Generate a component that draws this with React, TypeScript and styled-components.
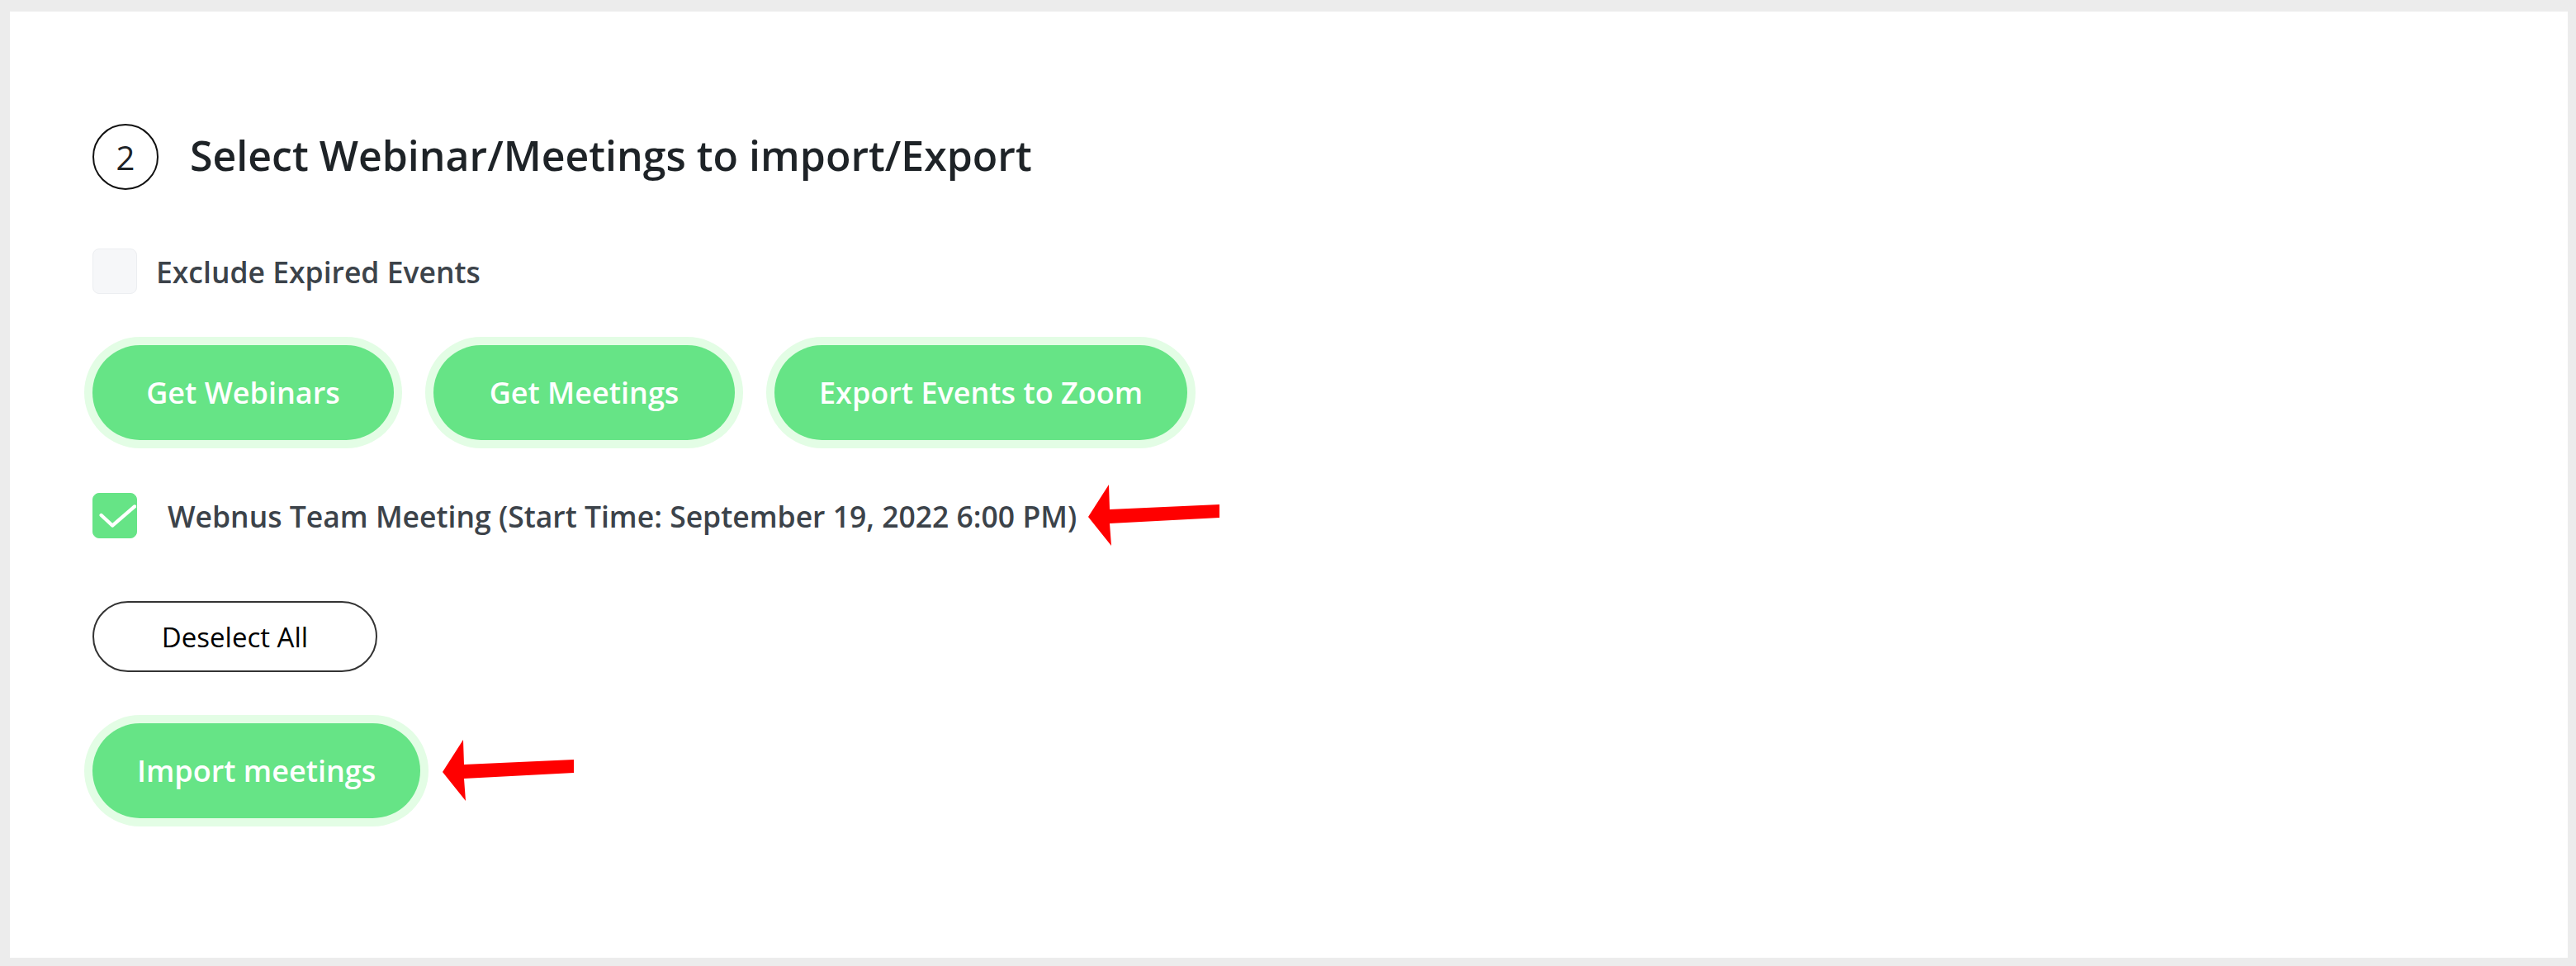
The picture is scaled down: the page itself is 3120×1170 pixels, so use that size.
import React from 'react';
import styled, { createGlobalStyle } from 'styled-components';

// STYLES
const GlobalStyle = createGlobalStyle`
  html, body {
    margin: 0;
    padding: 0;
    background: #ececec;
  }
  body {
    font-family: 'Open Sans', 'Noto Sans', sans-serif;
  }
`;

const Page = styled.div`
  box-sizing: border-box;
  width: 3120px;
  height: 1170px;
  padding: 14px 10px 10px 12px;
  background: #ececec;
`;

const Panel = styled.section`
  box-sizing: border-box;
  height: 100%;
  background: #ffffff;
  padding: 136px 0 0 100px;
  display: flex;
  flex-direction: column;
  align-items: flex-start;
`;

const StepHeader = styled.div`
  display: flex;
  align-items: center;
  height: 80px;
`;

const StepNumber = styled.span`
  box-sizing: border-box;
  width: 80px;
  height: 80px;
  border: 2px solid #111;
  border-radius: 50%;
  display: flex;
  align-items: center;
  justify-content: center;
  font-size: 40px;
  color: #1e2327;
`;

const Title = styled.h2`
  margin: -4px 0 0 38px;
  font-size: 50px;
  font-weight: 600;
  color: #1e2327;
`;

const CheckRow = styled.label<{ $top: number; $gap: number }>`
  display: flex;
  align-items: center;
  height: 55px;
  margin-top: ${p => p.$top}px;
  gap: ${p => p.$gap}px;
`;

const Box = styled.span<{ $checked?: boolean }>`
  box-sizing: border-box;
  width: 54px;
  height: 55px;
  border-radius: 8px;
  display: flex;
  align-items: center;
  justify-content: center;
  background: ${p => (p.$checked ? '#66e486' : '#f6f7f9')};
  border: 1px solid ${p => (p.$checked ? '#66e486' : '#eceef1')};
  flex-shrink: 0;
`;

const LabelText = styled.span`
  font-size: 35.5px;
  font-weight: 600;
  color: #3c434a;
`;

const ButtonRow = styled.div`
  display: flex;
  gap: 48px;
  margin-top: 62px;
`;

const GreenButton = styled.button`
  box-sizing: border-box;
  height: 115px;
  min-width: 365px;
  padding: 0 54px;
  border: none;
  border-radius: 58px;
  background: #66e486;
  box-shadow: 0 0 0 10px #e3fde5;
  color: #ffffff;
  font-family: 'Open Sans', sans-serif;
  font-size: 36px;
  font-weight: 600;
  cursor: pointer;
`;

const OutlineButton = styled.button`
  box-sizing: border-box;
  width: 345px;
  height: 86px;
  margin-top: 76px;
  border: 2px solid #333;
  border-radius: 43px;
  background: #ffffff;
  color: #000;
  font-family: 'Open Sans', sans-serif;
  font-size: 33px;
  font-weight: 400;
  cursor: pointer;
`;

const ImportRow = styled.div`
  display: flex;
  align-items: center;
  margin-top: 62px;
`;

const ArrowMark = styled.svg<{ $left: number }>`
  width: 160px;
  height: 75px;
  margin: -10px 0 -10px ${p => p.$left}px;
  flex-shrink: 0;
`;

// COMPONENTS
const Arrow: React.FC<{ left: number }> = ({ left }) => (
  <ArrowMark $left={left} viewBox="0 0 160 75">
    <polygon
      points="0,39 25,0 26,30 159,24 159,40 26,47 28,74"
      fill="#ff0000"
    />
  </ArrowMark>
);

const Tick: React.FC = () => (
  <svg width="54" height="55" viewBox="0 0 54 55">
    <polyline
      points="10,27 24,40 52,16"
      fill="none"
      stroke="#ffffff"
      strokeWidth="4.5"
      strokeLinecap="round"
      strokeLinejoin="round"
    />
  </svg>
);

const App: React.FC = () => (
  <Page>
    <GlobalStyle />
    <Panel>
      <StepHeader>
        <StepNumber>2</StepNumber>
        <Title>Select Webinar/Meetings to import/Export</Title>
      </StepHeader>

      <CheckRow $top={71} $gap={23}>
        <Box />
        <LabelText>Exclude Expired Events</LabelText>
      </CheckRow>

      <ButtonRow>
        <GreenButton>Get Webinars</GreenButton>
        <GreenButton>Get Meetings</GreenButton>
        <GreenButton>Export Events to Zoom</GreenButton>
      </ButtonRow>

      <CheckRow $top={64} $gap={37}>
        <Box $checked>
          <Tick />
        </Box>
        <LabelText>Webnus Team Meeting (Start Time: September 19, 2022 6:00 PM)</LabelText>
        <Arrow left={-23} />
      </CheckRow>

      <OutlineButton>Deselect All</OutlineButton>

      <ImportRow>
        <GreenButton>Import meetings</GreenButton>
        <Arrow left={27} />
      </ImportRow>
    </Panel>
  </Page>
);

export default App;
